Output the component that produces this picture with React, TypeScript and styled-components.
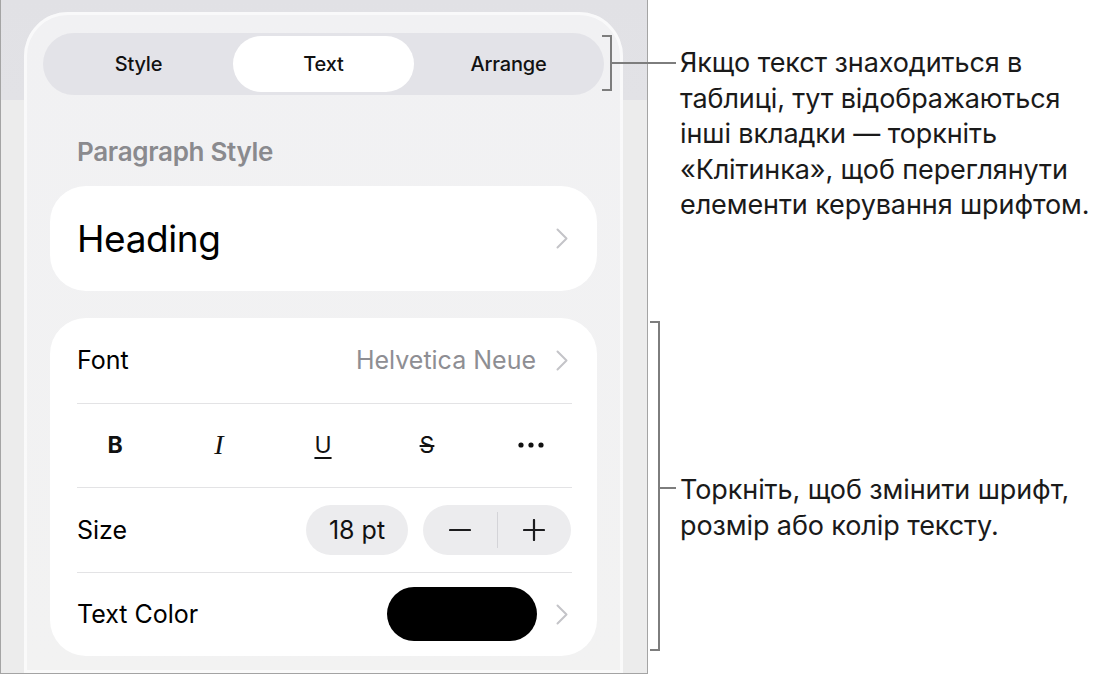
import styled, { createGlobalStyle } from 'styled-components';

const GlobalStyle = createGlobalStyle`
  html, body {
    margin: 0;
    padding: 0;
    background: #ffffff;
  }
  body {
    font-family: Inter, "Noto Sans", "DejaVu Sans", sans-serif;
    color: #000;
  }
`;

const Chevron = () => (
  <ChevronBox>
    <svg width='12' height='21' viewBox='0 0 12 21'>
      <path d='M1.5 1.5 L10.5 10.5 L1.5 19.5' fill='none' stroke='#c4c4c8' strokeWidth='2' strokeLinecap='round' strokeLinejoin='round' />
    </svg>
  </ChevronBox>
);

const App = () => {
  return (
    <Page>
      <GlobalStyle />
      <Frame>
        <Panel>
          <Segment role='tablist'>
            <Tab>Style</Tab>
            <Tab $active>Text</Tab>
            <Tab>Arrange</Tab>
          </Segment>

          <SectionTitle>Paragraph Style</SectionTitle>

          <StyleCard>
            <HeadingText>Heading</HeadingText>
            <Chevron />
          </StyleCard>

          <FontCard>
            <Row>
              <Label>Font</Label>
              <RowEnd>
                <Value>Helvetica Neue</Value>
                <Chevron />
              </RowEnd>
            </Row>
            <Row>
              <FormatGrid>
                <FormatBtn $weight={700}>B</FormatBtn>
                <FormatBtn $italic>I</FormatBtn>
                <FormatBtn $decoration='underline'>U</FormatBtn>
                <FormatBtn $decoration='line-through'>S</FormatBtn>
                <FormatBtn>
                  <svg width='26' height='6' viewBox='0 0 26 6'>
                    <circle cx='3' cy='3' r='2.6' fill='#111' />
                    <circle cx='13' cy='3' r='2.6' fill='#111' />
                    <circle cx='23' cy='3' r='2.6' fill='#111' />
                  </svg>
                </FormatBtn>
              </FormatGrid>
            </Row>
            <Row>
              <Label>Size</Label>
              <RowEnd $gap={15} $pad={1}>
                <SizePill>18 pt</SizePill>
                <Stepper>
                  <StepBtn>
                    <svg width='22' height='22' viewBox='0 0 22 22'>
                      <path d='M1 11 H21' stroke='#1c1c1e' strokeWidth='2.2' strokeLinecap='round' />
                    </svg>
                  </StepBtn>
                  <StepDivider />
                  <StepBtn>
                    <svg width='22' height='22' viewBox='0 0 22 22'>
                      <path d='M1 11 H21 M11 1 V21' stroke='#1c1c1e' strokeWidth='2.2' strokeLinecap='round' />
                    </svg>
                  </StepBtn>
                </Stepper>
              </RowEnd>
            </Row>
            <Row>
              <Label>Text Color</Label>
              <RowEnd $gap={19}>
                <Swatch $color='#000000' />
                <Chevron />
              </RowEnd>
            </Row>
          </FontCard>
        </Panel>
      </Frame>

      <Notes>
        <Callout $height={286} $top={35} $shift={-46}>
          <Bracket $height={56} />
          <Leader $width={64} $top={27} />
          <NoteText $top={10}>
            Якщо текст знаходиться в<br />
            таблиці, тут відображаються<br />
            інші вкладки — торкніть<br />
            «Клітинка», щоб переглянути<br />
            елементи керування шрифтом.
          </NoteText>
        </Callout>
        <Callout $height={340} $top={0} $shift={2}>
          <Bracket $height={330} />
          <Leader $width={16} $top={166} />
          <NoteText $top={151}>
            Торкніть, щоб змінити шрифт,
            <br />
            розмір або колір тексту.
          </NoteText>
        </Callout>
      </Notes>
    </Page>
  );
};

const Page = styled.div`
  width: 1117px;
  height: 676px;
  display: flex;
  overflow: hidden;
`;

const Frame = styled.div`
  box-sizing: border-box;
  width: 648px;
  height: 674px;
  flex-shrink: 0;
  border: 1px solid #a4a4a4;
  border-top: none;
  padding: 12px 0 0 23px;
  background: linear-gradient(to bottom, #e1e1e5 0, #e2e2e6 100px, #ececec 100px, #ececec 100%);
`;

const Panel = styled.div`
  box-sizing: border-box;
  width: 599px;
  height: 100%;
  border-radius: 44px 44px 0 0;
  background: linear-gradient(to bottom, #f1f1f3, #f2f2f2);
  box-shadow: inset 0 0 0 3px rgba(255, 255, 255, 0.6);
  padding-top: 21px;
  display: flex;
  flex-direction: column;
`;

const Segment = styled.div`
  box-sizing: border-box;
  margin-left: 19px;
  width: 561px;
  height: 62px;
  padding: 3px;
  border-radius: 31px;
  background: #e3e3e8;
  display: grid;
  grid-template-columns: repeat(3, 1fr);
`;

const Tab = styled.div<{ $active?: boolean }>`
  display: flex;
  align-items: center;
  justify-content: center;
  margin: 0 2px;
  border-radius: 28px;
  font-size: 20px;
  font-weight: 500;
  letter-spacing: -0.2px;
  color: #111;
  background: ${(p) => (p.$active ? '#ffffff' : 'transparent')};
`;

const SectionTitle = styled.h2`
  margin: 42px 0 0 53px;
  font-size: 26px;
  line-height: 30px;
  font-weight: 600;
  letter-spacing: -0.3px;
  color: #8a8a8e;
`;

const Card = styled.div`
  margin-left: 26px;
  width: 547px;
  background: #ffffff;
  border-radius: 36px;
`;

const StyleCard = styled(Card)`
  box-sizing: border-box;
  margin-top: 19px;
  height: 105px;
  padding: 0 29px 0 27px;
  display: flex;
  align-items: center;
  justify-content: space-between;
`;

const HeadingText = styled.span`
  font-size: 37px;
  letter-spacing: -0.4px;
  color: #000;
`;

const ChevronBox = styled.span`
  display: flex;
  align-items: center;
`;

const FontCard = styled(Card)`
  margin-top: 27px;
  height: 338px;
  display: flex;
  flex-direction: column;
`;

const Row = styled.div`
  box-sizing: border-box;
  height: 84.5px;
  margin: 0 25px 0 27px;
  display: flex;
  align-items: center;
  justify-content: space-between;
  & + & {
    border-top: 1.5px solid #e3e3e5;
  }
`;

const Label = styled.span`
  font-size: 25px;
  color: #000;
`;

const Value = styled(Label)`
  color: #8e8e93;
`;

const RowEnd = styled.div<{ $gap?: number; $pad?: number }>`
  display: flex;
  align-items: center;
  gap: ${(p) => p.$gap ?? 20}px;
  padding-right: ${(p) => p.$pad ?? 4}px;
`;

const FormatGrid = styled.div`
  flex: 1;
  margin: 0 -11px 0 -14px;
  display: grid;
  grid-template-columns: repeat(5, 1fr);
`;

const FormatBtn = styled.span<{ $weight?: number; $italic?: boolean; $decoration?: string }>`
  display: flex;
  align-items: center;
  justify-content: center;
  height: 40px;
  font-family: ${(p) => (p.$italic ? "'Liberation Serif', 'Times New Roman', serif" : 'Inter, sans-serif')};
  font-size: ${(p) => (p.$italic ? 28 : 23)}px;
  font-weight: ${(p) => p.$weight ?? 400};
  font-style: ${(p) => (p.$italic ? 'italic' : 'normal')};
  text-decoration: ${(p) => p.$decoration ?? 'none'};
  text-decoration-thickness: 1.5px;
  text-underline-offset: 4px;
  color: #111;
`;

const SizePill = styled.div`
  box-sizing: border-box;
  width: 102px;
  height: 50px;
  border-radius: 25px;
  background: #ececee;
  display: flex;
  align-items: center;
  justify-content: center;
  font-size: 25px;
  color: #111;
`;

const Stepper = styled.div`
  width: 148px;
  height: 50px;
  border-radius: 25px;
  background: #ececee;
  display: flex;
  align-items: center;
`;

const StepBtn = styled.span`
  flex: 1;
  display: flex;
  align-items: center;
  justify-content: center;
`;

const StepDivider = styled.span`
  width: 1px;
  height: 36px;
  background: #d4d4d8;
`;

const Swatch = styled.div<{ $color: string }>`
  width: 150px;
  height: 54px;
  border-radius: 27px;
  background: ${(p) => p.$color};
`;

const Notes = styled.div`
  flex: 1;
  display: flex;
  flex-direction: column;
`;

const Callout = styled.div<{ $height: number; $top: number; $shift: number }>`
  display: flex;
  align-items: flex-start;
  height: ${(p) => p.$height}px;
  margin-top: ${(p) => p.$top}px;
  margin-left: ${(p) => p.$shift}px;
`;

const Bracket = styled.span<{ $height: number }>`
  box-sizing: border-box;
  width: 10px;
  height: ${(p) => p.$height}px;
  border: 2px solid #7d7d7d;
  border-left: none;
  flex-shrink: 0;
`;

const Leader = styled.span<{ $width: number; $top: number }>`
  width: ${(p) => p.$width}px;
  height: 2px;
  margin-top: ${(p) => p.$top}px;
  background: #7d7d7d;
  flex-shrink: 0;
`;

const NoteText = styled.p<{ $top: number }>`
  margin: ${(p) => p.$top}px 0 0 4px;
  font-size: 27px;
  line-height: 35.5px;
  letter-spacing: -0.1px;
  white-space: nowrap;
  color: #1a1a1a;
`;

export default App;
